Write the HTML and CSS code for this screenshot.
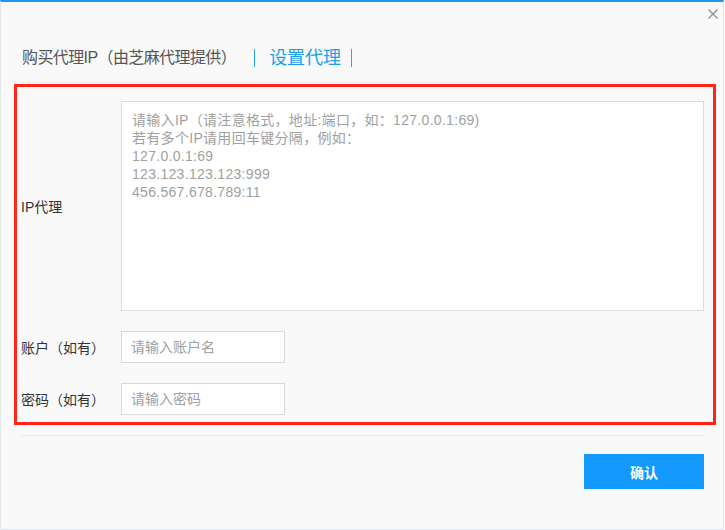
FILE: index.html
```html
<!DOCTYPE html>
<html lang="zh-CN">
<head>
  <meta charset="UTF-8" />
  <meta name="viewport" content="width=device-width, initial-scale=1.0"/>
  <title>设置代理</title>
  <link rel="stylesheet" href="styles.css">
</head>
<body>
  <div class="dialog">
    <div class="close-row">
      <button class="close-btn" type="button" aria-label="关闭">
        <svg width="10" height="10" viewBox="0 0 10 10">
          <path d="M0.5 0.5 L9.5 9.5 M9.5 0.5 L0.5 9.5" stroke="#8a8a8a" stroke-width="1.2" fill="none"/>
        </svg>
      </button>
    </div>
    <div class="content">
      <div class="tabs">
        <span class="tab buy">购买代理IP（由芝麻代理提供）</span>
        <span class="tab-sep"></span>
        <span class="tab active">设置代理</span>
        <span class="tab-sep last"></span>
      </div>

      <form class="proxy-form" id="proxyForm">
        <label class="form-label" for="ipList">IP代理</label>
        <textarea id="ipList" class="ip-input" placeholder="请输入IP（请注意格式，地址:端口，如：127.0.0.1:69)&#10;若有多个IP请用回车键分隔，例如：&#10;127.0.0.1:69&#10;123.123.123.123:999&#10;456.567.678.789:11"></textarea>

        <label class="form-label" for="account">账户（如有）</label>
        <input type="text" id="account" class="text-input" placeholder="请输入账户名" />

        <label class="form-label" for="password">密码（如有）</label>
        <input type="password" id="password" class="text-input" placeholder="请输入密码" />
      </form>

      <div class="divider"></div>

      <div class="footer">
        <button type="submit" form="proxyForm" class="confirm-btn">确认</button>
      </div>
    </div>
  </div>
</body>
</html>
```

FILE: styles.css
```css
body {
  margin: 0;
  background-color: #fff;
  font-family: 'Liberation Sans', 'Noto Sans CJK SC', sans-serif;
}
.dialog {
  box-sizing: border-box;
  width: 724px;
  height: 530px;
  background-color: #f9f9f9;
  border: 1px solid #e1e6ed;
  border-top: 2px solid #1a95f3;
}
.close-row {
  display: flex;
  justify-content: flex-end;
  height: 20px;
  padding-right: 5px;
}
.close-btn {
  margin-top: 7px;
  padding: 0;
  width: 10px;
  height: 10px;
  border: none;
  background: none;
  cursor: pointer;
  display: flex;
}
.content {
  padding: 0 18px 0 19px;
}
.tabs {
  display: flex;
  align-items: center;
  height: 49px;
  padding-top: 11px;
  padding-left: 2px;
  border-bottom: 1px solid #ececec;
}
.tab {
  font-size: 16px;
  color: #555;
  line-height: 20px;
}
.tab.buy {
  letter-spacing: -0.6px;
}
.tab.active {
  font-size: 18px;
  color: #1b9ee6;
}
.tab-sep {
  width: 1px;
  height: 18px;
  background-color: #2aa6ea;
  margin: 0 14px 0 18px;
}
.tab-sep.last {
  margin: 0 0 0 10px;
}
.proxy-form {
  display: grid;
  grid-template-columns: 100px 1fr;
  align-items: center;
  row-gap: 20px;
  margin: 1px -11px 0 -6px;
  padding: 14px 9px 7px 4px;
  border: 3px solid #ff2416;
}
.form-label {
  font-size: 14px;
  color: #333;
}
.ip-input {
  box-sizing: border-box;
  height: 210px;
  padding: 9px 10px;
  border: 1px solid #dcdcdc;
  background-color: #fff;
  font-family: inherit;
  font-size: 14px;
  line-height: 18px;
  letter-spacing: 0.3px;
  resize: none;
  outline: none;
}
.ip-input::placeholder,
.text-input::placeholder {
  color: #a0a0a0;
}
.text-input {
  box-sizing: border-box;
  width: 164px;
  height: 32px;
  padding: 0 9px;
  border: 1px solid #d8d8d8;
  background-color: #fff;
  font-family: inherit;
  font-size: 14px;
  outline: none;
}
.divider {
  height: 1px;
  margin: 10px 1px 0 1px;
  background-color: #ebebeb;
}
.footer {
  display: flex;
  justify-content: flex-end;
  padding: 18px 1px 0 0;
}
.confirm-btn {
  width: 120px;
  height: 35px;
  border: none;
  background-color: #1299fd;
  color: #fff;
  font-family: inherit;
  font-size: 14px;
  font-weight: bold;
  cursor: pointer;
}
.confirm-btn:hover {
  background-color: #3aa9fd;
}
```
